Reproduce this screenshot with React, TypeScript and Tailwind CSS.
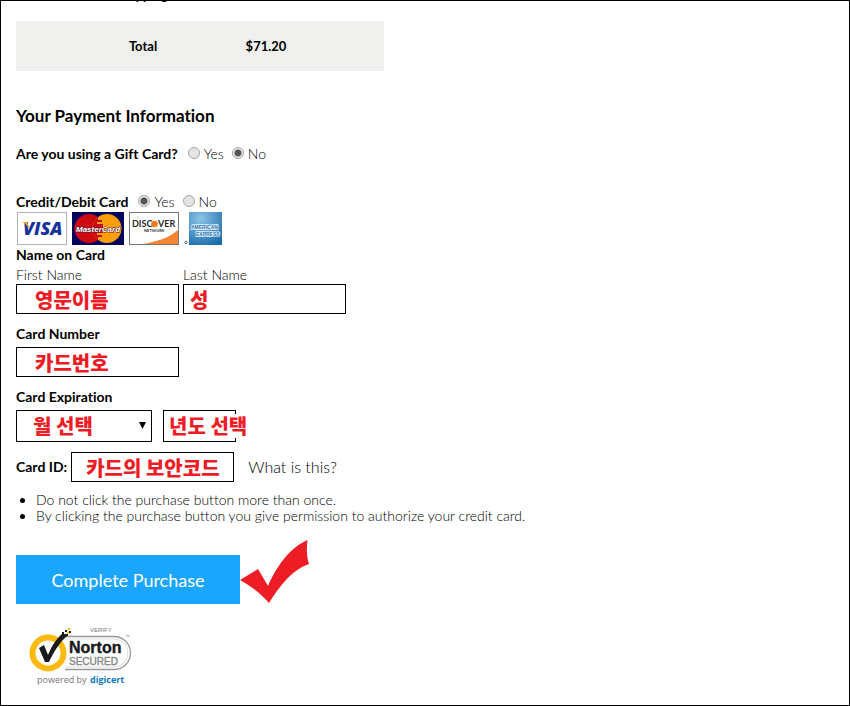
import React from 'react'

interface RadioProps {
  name: string
  label: string
  checked?: boolean
}

interface NoteInputProps {
  id: string
  note: string
  className: string
}

const NOTE_FONT = "font-['Noto_Sans_CJK_KR',sans-serif] text-xl font-black text-[#ee1c25]"

function Radio({ name, label, checked }: RadioProps) {
  return (
    <label className="flex h-5 items-center gap-1">
      <input
        type="radio"
        name={name}
        defaultChecked={checked}
        className="mb-0.5 size-3 appearance-none rounded-full border border-[#a6a6a6] bg-[#e4e4e4] checked:bg-[radial-gradient(circle,#555_0_3px,#eaeaea_4px)]"
      />
      {label}
    </label>
  )
}

function NoteInput({ id, note, className }: NoteInputProps) {
  return (
    <input
      id={id}
      type="text"
      defaultValue={note}
      className={`block h-[30px] w-[163px] border border-black bg-white outline-none ${NOTE_FONT} ${className}`}
    />
  )
}

function VisaLogo() {
  return (
    <svg width="50" height="33" viewBox="0 0 50 33" role="img" aria-label="Visa">
      <rect x="0.5" y="0.5" width="49" height="32" fill="#fff" stroke="#b4b4b4" />
      <text x="6" y="23" fontFamily="Open Sans, sans-serif" fontSize="18" fontWeight="800" fontStyle="italic" fill="#14349c">
        VISA
      </text>
      <path d="M5 10h5l3 8c-2-4-5-7-8-8z" fill="#f9a01b" />
    </svg>
  )
}

function MasterCardLogo() {
  return (
    <svg width="52" height="33" viewBox="0 0 52 33" role="img" aria-label="MasterCard">
      <rect width="52" height="33" fill="#04045e" />
      <circle cx="17" cy="16.5" r="14.5" fill="#cc0a0f" />
      <circle cx="35" cy="16.5" r="14.5" fill="#f99f0c" />
      <path d="M26 5.1a14.5 14.5 0 0 0 0 22.8V25h4v-2h-5v-2h6v-9h-6v-2h5V8h-4z" fill="#cc0a0f" />
      <text x="4" y="20" fontFamily="Liberation Sans, sans-serif" fontSize="8" fontWeight="700" fontStyle="italic" fill="#fff" stroke="#5a1030" strokeWidth="1" paintOrder="stroke">
        MasterCard
      </text>
    </svg>
  )
}

function DiscoverLogo() {
  return (
    <svg width="50" height="33" viewBox="0 0 50 33" role="img" aria-label="Discover">
      <rect x="0.5" y="0.5" width="49" height="32" fill="#fff" stroke="#777" />
      <path d="M49 18v14H13c14-2 27-6 36-14z" fill="#f58532" />
      <g fontFamily="Lato, sans-serif" fill="#2b2b2b">
        <text x="3" y="15" fontSize="9" fontWeight="700">DISC</text>
        <text x="29" y="15" fontSize="9" fontWeight="700">VER</text>
        <text x="15" y="20" fontSize="4" fontWeight="700">NETWORK</text>
      </g>
      <circle cx="25.5" cy="12" r="3.3" fill="#f47b20" />
    </svg>
  )
}

function AmexLogo() {
  return (
    <svg width="38" height="33" viewBox="0 0 38 33" role="img" aria-label="American Express">
      <defs>
        <radialGradient id="amex" cx="0.35" cy="0.2" r="0.9">
          <stop offset="0" stopColor="#8cc4e6" />
          <stop offset="1" stopColor="#1b6cab" />
        </radialGradient>
      </defs>
      <rect x="5" width="33" height="33" fill="url(#amex)" />
      <g fontFamily="Liberation Sans, sans-serif" fontSize="5" fontWeight="700" fill="#2a74b0" stroke="#e6f3fb" strokeWidth="1.5" paintOrder="stroke">
        <text x="7" y="17">AMERICAN</text>
        <text x="12" y="24">EXPRESS</text>
      </g>
      <circle cx="2" cy="30.5" r="1.2" fill="none" stroke="#44698a" />
    </svg>
  )
}

function RedCheck() {
  return (
    <svg width="70" height="64" viewBox="0 0 70 64" aria-hidden="true">
      <path d="M0 40 18 29 28 46C37 25 51 7 67.5 0c-1 10-1 16 1.500 24C52 30 41 44 29 63 20 53 11 46 0 40z" fill="#ee1c25" />
    </svg>
  )
}

function NortonSeal() {
  return (
    <svg width="104" height="62" viewBox="0 0 104 62" role="img" aria-label="Norton Secured, powered by digicert">
      <path d="M36 10.5h49a16.5 16.5 0 0 1 0 33H36" fill="#fff" stroke="#999" strokeWidth="1.3" />
      <path d="M36 13h49a14 14 0 0 1 0 28H36" fill="none" stroke="#ddd" />
      <circle cx="19" cy="27" r="15.5" fill="#fff" stroke="#fdbb11" strokeWidth="6" />
      <path d="M10 22l5-3 4 10C23 19 28 12 34 7l4 3C31 16 25 25 20 36h-4z" fill="#1a1a1a" />
      <path d="M33 6h2v2h-2zM36 8h3v2h-3zM36 4h2v2h-2zM40 5h2v2h-2z" fill="#1a1a1a" />
      <path d="M38 6h2v2h-2zM39 2h2v2h-2z" fill="#fdbb11" />
      <g fontFamily="Liberation Sans, sans-serif" fontWeight="400">
        <text x="61" y="6" fontSize="6" fill="#777">VERIFY</text>
        <text x="40" y="27" fontSize="16" fontWeight="700" fill="#1a1a1a" stroke="#1a1a1a" strokeWidth="0.4">Norton</text>
        <text x="40" y="39" fontSize="10" fill="#888" stroke="#888" strokeWidth="0.4">SECURED</text>
        <text x="96" y="12" fontSize="5" fill="#888">™</text>
      </g>
      <g fontFamily="Open Sans, sans-serif" fontSize="9">
        <text x="8" y="57" fontWeight="400" fill="#777">powered by</text>
        <text x="61" y="57" fontWeight="700" fill="#0a78c2">digicert</text>
      </g>
    </svg>
  )
}

export default function App() {
  return (
    <div className="min-h-screen overflow-hidden border border-black bg-white pl-[15px] font-[Lato,sans-serif] text-sm font-light text-black [font-variant-ligatures:none]">
      {/* Order totals */}
      <table className="-mt-4 w-[368px] table-fixed text-center text-[13px] font-bold">
        <colgroup>
          <col className="w-[66px]" />
          <col className="w-[122px]" />
          <col className="w-[124px]" />
          <col />
        </colgroup>
        <tbody>
          <tr className="h-9 align-top leading-5">
            <td />
            <th scope="row">Shipping</th>
            <td />
            <td />
          </tr>
          <tr className="h-[50px] bg-[#f0f0ee]">
            <td />
            <th scope="row">Total</th>
            <td>$71.20</td>
            <td />
          </tr>
        </tbody>
      </table>

      <form className="pb-4" onSubmit={(e) => e.preventDefault()}>
        <h2 className="mt-[35px] text-[17px] leading-5 font-bold">Your Payment Information</h2>

        {/* Payment type */}
        <fieldset className="mt-[18px] flex items-center gap-2">
          <legend className="float-left pr-0.5 leading-5 font-bold">Are you using a Gift Card?</legend>
          <Radio name="gift" label="Yes" />
          <Radio name="gift" label="No" checked />
        </fieldset>
        <fieldset className="mt-7 flex items-center gap-2">
          <legend className="float-left pr-0.5 leading-5 font-bold">Credit/Debit Card</legend>
          <Radio name="credit" label="Yes" checked />
          <Radio name="credit" label="No" />
        </fieldset>
        <div className="flex gap-[5px] pl-px">
          <VisaLogo />
          <MasterCardLogo />
          <DiscoverLogo />
          <AmexLogo />
        </div>

        {/* Card holder */}
        <h3 className="font-bold">Name on Card</h3>
        <div className="flex gap-1">
          <div>
            <label htmlFor="first" className="block leading-[19px]">First Name</label>
            <NoteInput id="first" note="영문이름" className="pl-[18px]" />
          </div>
          <div>
            <label htmlFor="last" className="block leading-[19px]">Last Name</label>
            <NoteInput id="last" note="성" className="pl-1.5" />
          </div>
        </div>

        {/* Card details */}
        <label htmlFor="number" className="mt-2.5 mb-[3px] block font-bold">Card Number</label>
        <NoteInput id="number" note="카드번호" className="pl-[18px]" />

        <h3 className="mt-2.5 mb-[3px] font-bold">Card Expiration</h3>
        <div className="flex gap-[11px]">
          <div className="relative">
            <select
              aria-label="Expiration month"
              className={`block h-8 w-[136px] appearance-none border border-black bg-white pl-4 outline-none ${NOTE_FONT}`}
            >
              <option>월 선택</option>
            </select>
            <svg className="pointer-events-none absolute top-3 right-1.5" width="7" height="7" viewBox="0 0 7 7" aria-hidden="true">
              <path d="M0 0h7L3.5 7z" fill="#000" />
            </svg>
          </div>
          <div className="relative">
            <select
              aria-label="Expiration year"
              className="block h-8 w-[73px] appearance-none border border-black bg-white outline-none"
            />
            <span className={`pointer-events-none absolute top-1 left-1.5 bg-white leading-6 whitespace-nowrap ${NOTE_FONT}`}>
              년도 선택
            </span>
          </div>
        </div>
        <div className="mt-2.5 flex items-center">
          <label htmlFor="cid" className="mr-1 font-bold">Card ID:</label>
          <NoteInput id="cid" note="카드의 보안코드" className="pl-3.5" />
          <a href="#card-id" className="ml-3.5 text-base leading-5">What is this?</a>
        </div>

        <ul className="mt-2.5 list-disc pl-5 leading-4">
          <li>Do not click the purchase button more than once.</li>
          <li>By clicking the purchase button you give permission to authorize your credit card.</li>
        </ul>

        <div className="mt-4 flex items-end">
          <button type="submit" className="h-[49px] w-56 bg-[#1aa5ff] text-lg font-normal text-white">
            Complete Purchase
          </button>
          <RedCheck />
        </div>
        <div className="mt-[22px] ml-[13px]">
          <NortonSeal />
        </div>
      </form>
    </div>
  )
}
